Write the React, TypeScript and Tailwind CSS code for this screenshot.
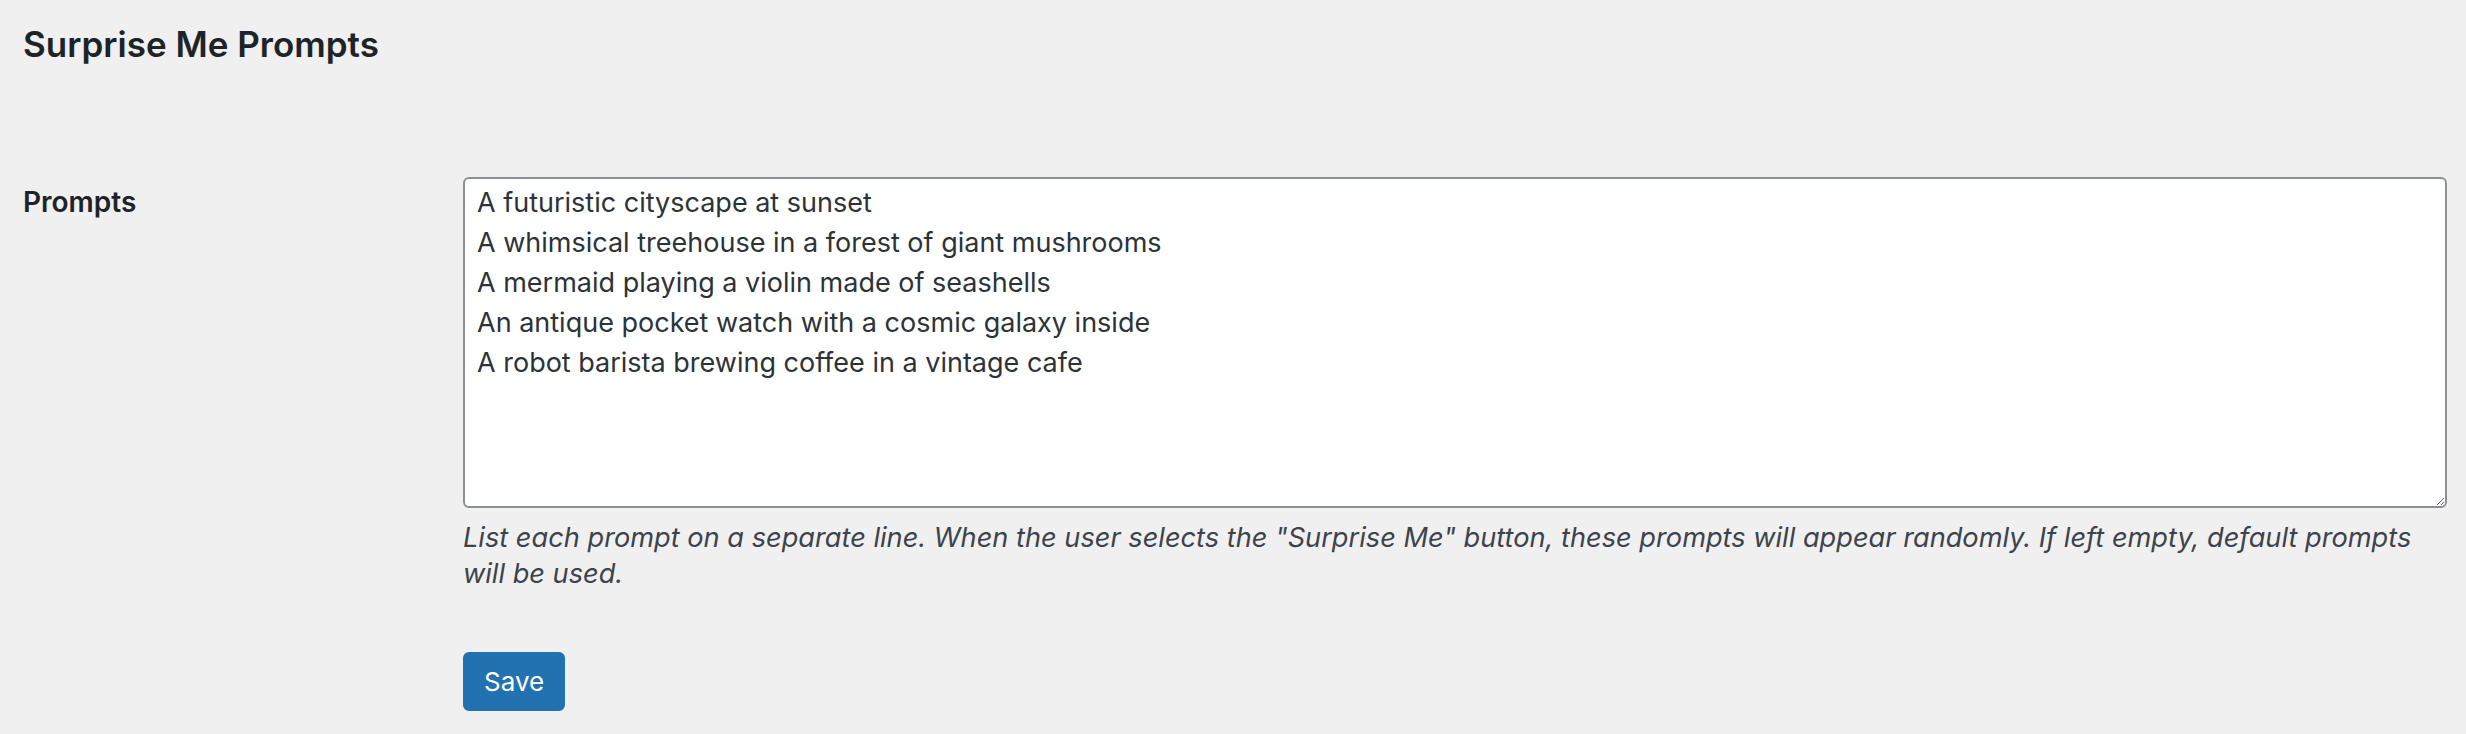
const prompts = [
  "A futuristic cityscape at sunset",
  "A whimsical treehouse in a forest of giant mushrooms",
  "A mermaid playing a violin made of seashells",
  "An antique pocket watch with a cosmic galaxy inside",
  "A robot barista brewing coffee in a vintage cafe",
];

export default function App() {
  return (
    <div className="min-h-screen bg-[#f0f0f1] font-['Inter',sans-serif] text-[#1d2327]">
      <div className="pl-[23px] pt-[22px]">
        <h1 className="text-[35px] leading-[44px] font-semibold">Surprise Me Prompts</h1>

        <div className="mt-[111px] flex">
          <div className="w-[440px] shrink-0 pt-[5px] text-[28px] leading-[40px] font-semibold">
            Prompts
          </div>

          <div className="w-[1984px]">
            <textarea
              defaultValue={prompts.join("\n")}
              className="block h-[331px] w-full rounded-[6px] border-2 border-[#8c8f94] bg-white px-[12px] py-[4px] text-[27px] leading-[40px] text-[#2c3338] outline-none"
            />
            <p className="mt-[12px] text-[27.2px] leading-[36px] italic text-[#3c434a]">
              List each prompt on a separate line. When the user selects the "Surprise Me" button, these prompts will
              appear randomly. If left empty, default prompts will be used.
            </p>

            <button className="mt-[60px] h-[59px] rounded-[6px] border-2 border-[#2271b1] bg-[#2271b1] px-[19px] text-[26px] leading-[55px] text-white">
              Save
            </button>
          </div>
        </div>
      </div>
    </div>
  );
}
